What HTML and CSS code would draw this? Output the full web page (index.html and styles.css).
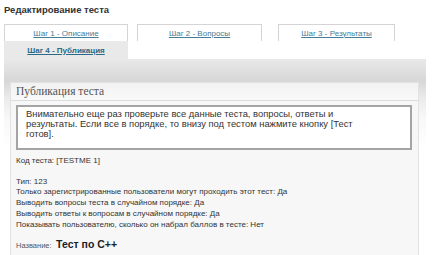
FILE: index.html
```html
<!DOCTYPE html>
<html lang="ru">
<head>
<meta charset="utf-8">
<title>Редактирование теста</title>
<link rel="stylesheet" href="styles.css">
</head>
<body>
<div class="page">
  <h1 class="title">Редактирование теста</h1>
  <div class="tabs">
    <div class="tab-row">
      <div class="tab tab-1"><a href="#">Шаг 1 - Описание</a></div>
      <div class="tab tab-2"><a href="#">Шаг 2 - Вопросы</a></div>
      <div class="tab tab-3"><a href="#">Шаг 3 - Результаты</a></div>
    </div>
    <div class="tab-row">
      <div class="tab tab-1 active"><a href="#">Шаг 4 - Публикация</a></div>
    </div>
  </div>
  <div class="panel">
    <div class="box">
      <div class="box-head">Публикация теста</div>
      <div class="box-body">
        <div class="notice">Внимательно еще раз проверьте все данные теста, вопросы, ответы и<br>результаты. Если все в порядке, то внизу под тестом нажмите кнопку [Тест<br>готов].</div>
        <p class="line code">Код теста: [TESTME 1]</p>
        <div class="props">
          <p class="line">Тип: 123</p>
          <p class="line">Только зарегистрированные пользователи могут проходить этот тест: Да</p>
          <p class="line">Выводить вопросы теста в случайном порядке: Да</p>
          <p class="line">Выводить ответы к вопросам в случайном порядке: Да</p>
          <p class="line">Показывать пользователю, сколько он набрал баллов в тесте: Нет</p>
        </div>
        <p class="name"><span class="name-label">Название:</span> <span class="name-value">Тест по C++</span></p>
      </div>
    </div>
  </div>
</div>
</body>
</html>
```
FILE: styles.css
```css
html, body {
  margin: 0;
  padding: 0;
  background: #ffffff;
}
body {
  font-family: "Liberation Sans", Arial, sans-serif;
  color: #333333;
}
.page {
  padding: 4px 0 0 4px;
}
.title {
  margin: 0;
  font-size: 9.5px;
  font-weight: bold;
  line-height: 11px;
  color: #333333;
  height: 20px;
}
.tabs {
  display: flex;
  flex-direction: column;
}
.tab-row {
  display: flex;
}
.tab {
  box-sizing: border-box;
  height: 17px;
  display: flex;
  align-items: center;
  justify-content: center;
  font-size: 8px;
  background: #ffffff;
  border: 1px solid #d4d4d4;
  border-bottom: none;
}
.tab a {
  color: #467d97;
  text-decoration: underline;
}
.tab-1 { width: 124px; }
.tab-2 { width: 125px; margin-left: 9px; }
.tab-3 { width: 117px; margin-left: 16px; }
.tab.active {
  height: 18px;
  background: #e9e9e9;
  border: none;
  font-weight: bold;
}
.tab.active a {
  color: #2b6a88;
}
.panel {
  width: 422px;
  box-sizing: border-box;
  padding: 23px 7px 0 6px;
  height: 200px;
  background: linear-gradient(to bottom, #e9e9e9 0px, #d7d7d7 22px, #ececec 40px, #f8f8f8 60px, #ffffff 90px);
}
.box {
  border: 1px solid #e2e2e2;
  border-bottom: none;
  background: #f7f7f7;
}
.box-head {
  height: 17px;
  line-height: 17px;
  padding-left: 5px;
  font-family: "Liberation Serif", "Times New Roman", serif;
  font-size: 11.5px;
  color: #555555;
  background: linear-gradient(to bottom, #f2f2f2, #f9f9f9);
  border-bottom: 1px solid #dcdcdc;
}
.box-body {
  padding: 4px 6px 6px 5px;
}
.notice {
  border: 2px solid #a4a4a4;
  background: #ffffff;
  padding: 2px 8px 9px 8px;
  font-size: 9.4px;
  line-height: 10px;
  color: #333333;
  white-space: nowrap;
}
.line {
  margin: 0;
  font-size: 8px;
  line-height: 10.7px;
  color: #333333;
}
.code {
  margin-top: 6px;
}
.props {
  margin-top: 10px;
}
.name {
  margin: 6px 0 0 0;
  line-height: 14px;
}
.name-label {
  font-size: 7.5px;
  color: #555555;
}
.name-value {
  font-size: 10.5px;
  font-weight: bold;
  color: #222222;
}
```
